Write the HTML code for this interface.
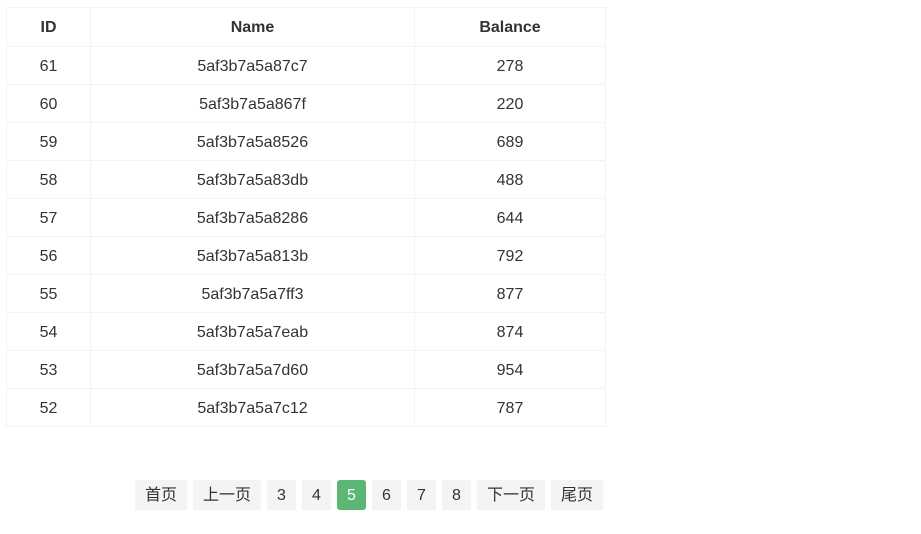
<!DOCTYPE html><html><head><meta charset="utf-8"><style>
body{margin:0;background:#fff;font-family:"Liberation Sans","Noto Sans CJK SC",sans-serif;color:#333;font-size:16px}
table{position:absolute;left:6px;top:7px;border-collapse:collapse;width:600px}
td,th{border:1px solid #f0f4f4;height:35px;padding:2px 0 0;text-align:center}
th{font-weight:bold;height:36px}
.p{position:absolute;top:480px;height:30px;line-height:31px;background:#f4f4f4;text-align:center;font-size:16px;color:#333}
.a{background:#5cb775;color:#fff;border-radius:3px}
</style></head><body>
<table>
<tr><th style="width:83px">ID</th><th style="width:323px">Name</th><th>Balance</th></tr>
<tr><td>61</td><td>5af3b7a5a87c7</td><td>278</td></tr>
<tr><td>60</td><td>5af3b7a5a867f</td><td>220</td></tr>
<tr><td>59</td><td>5af3b7a5a8526</td><td>689</td></tr>
<tr><td>58</td><td>5af3b7a5a83db</td><td>488</td></tr>
<tr><td>57</td><td>5af3b7a5a8286</td><td>644</td></tr>
<tr><td>56</td><td>5af3b7a5a813b</td><td>792</td></tr>
<tr><td>55</td><td>5af3b7a5a7ff3</td><td>877</td></tr>
<tr><td>54</td><td>5af3b7a5a7eab</td><td>874</td></tr>
<tr><td>53</td><td>5af3b7a5a7d60</td><td>954</td></tr>
<tr><td>52</td><td>5af3b7a5a7c12</td><td>787</td></tr>
</table>
<div class="p" style="left:135px;width:52px">首页</div>
<div class="p" style="left:193px;width:68px">上一页</div>
<div class="p" style="left:267px;width:29px">3</div>
<div class="p" style="left:302px;width:29px">4</div>
<div class="p a" style="left:337px;width:29px">5</div>
<div class="p" style="left:372px;width:29px">6</div>
<div class="p" style="left:407px;width:29px">7</div>
<div class="p" style="left:442px;width:29px">8</div>
<div class="p" style="left:477px;width:68px">下一页</div>
<div class="p" style="left:551px;width:52px">尾页</div>
</body></html>
